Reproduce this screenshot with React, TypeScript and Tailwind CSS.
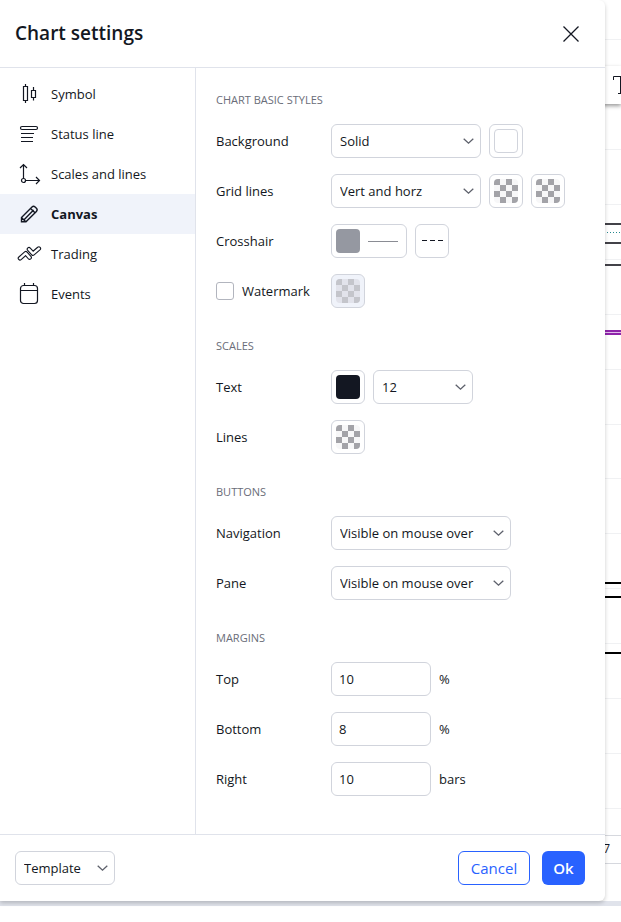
import { useId } from 'react';
import type { ReactNode } from 'react';

const menu: { name: string; icon: ReactNode }[] = [
  {
    name: 'Symbol',
    icon: (
      <path d="M8.5 6.5h4v14h-4z M10.5 4v2.5 M10.5 20.5V23 M16.5 10.5h4v7h-4z M18.5 7v3.5 M18.5 17.5v3" strokeWidth="1.2" />
    ),
  },
  {
    name: 'Status line',
    icon: (
      <g strokeWidth="1.2">
        <rect x="5.5" y="6.5" width="17" height="3" rx="1.5" />
        <path d="M6 13.5h13 M6 17.5h12 M6 21.5h12" />
      </g>
    ),
  },
  {
    name: 'Scales and lines',
    icon: (
      <g strokeWidth="1.2">
        <circle cx="8.5" cy="20.5" r="2" />
        <path d="M8.5 18.5v-14 M5 8l3.5-3.5 3.5 3.5 M10.5 20.5h14 M21 17l3.5 3.5-3.5 3.5" />
      </g>
    ),
  },
  {
    name: 'Canvas',
    icon: (
      <path
        strokeWidth="1.4"
        d="M6.5 17.5L17 7a2.2 2.2 0 0 1 3.1 0l1.3 1.3a2.2 2.2 0 0 1 0 3.1L11 21.8H6.5z M6.7 17.7l4.1 4.1 M9.3 19.4l9.3-9.3 M15.6 8.4l4.4 4.4"
      />
    ),
  },
  {
    name: 'Trading',
    icon: (
      <g strokeLinecap="round" strokeLinejoin="round">
        <path strokeWidth="4.6" d="M5 18.3L10.8 13.2 14.6 17.6 M14 9.2L18 13.6 23.8 8.6" />
        <path stroke="#fff" strokeWidth="2.4" d="M5 18.3L10.8 13.2 14.6 17.6 M14 9.2L18 13.6 23.8 8.6" />
      </g>
    ),
  },
  {
    name: 'Events',
    icon: (
      <g strokeWidth="1.2">
        <rect x="5.5" y="5.5" width="17" height="18" rx="3" />
        <path d="M5.5 10.5h17 M9.5 3v2.5 M18.5 3v2.5" />
      </g>
    ),
  },
];

function Dropdown({ label, value, width, id }: { label?: string; value: string; width: string; id?: string }) {
  return (
    <div className={`relative ${width}`}>
      <select
        id={id}
        aria-label={label}
        className="h-[34px] w-full appearance-none rounded-md border border-[#d1d4dc] bg-white pr-7 pl-2 text-[#131722]"
      >
        <option>{value}</option>
      </select>
      <svg
        className="pointer-events-none absolute top-[14px] right-[7px] h-[7px] w-[11px]"
        viewBox="0 0 11 7"
        fill="none"
        stroke="#5d606b"
        strokeWidth="1.3"
      >
        <path d="M.7 .8L5.5 5.2 10.3 .8" />
      </svg>
    </div>
  );
}

function Checker({ muted }: { muted?: boolean }) {
  return (
    <svg
      viewBox="0 0 24 24"
      className={muted ? 'size-6 rounded-sm bg-[#e2e3eb]' : 'size-6 rounded-sm bg-[#f7f7f8]'}
      fill={muted ? '#c4c5cb' : '#a3a3a8'}
      shapeRendering="crispEdges"
    >
      {[0, 1, 2, 3].map((row) =>
        [0, 1].map((col) => <rect key={`${row}-${col}`} x={col * 12 + (row % 2) * 6} y={row * 6} width="6" height="6" />),
      )}
    </svg>
  );
}

function Swatch({ label, id, children, disabled }: { label?: string; id?: string; children: ReactNode; disabled?: boolean }) {
  return (
    <button
      id={id}
      aria-label={label}
      disabled={disabled}
      className="flex size-[34px] items-center justify-center rounded-md border border-[#d1d4dc] bg-white disabled:bg-[#f0f3fa]"
    >
      {children}
    </button>
  );
}

function Section({ title, children }: { title: string; children: ReactNode }) {
  return (
    <section>
      <h2 className="mb-4 text-[11px] leading-4 text-[#6a6d78] uppercase">{title}</h2>
      <div className="flex flex-col gap-4">{children}</div>
    </section>
  );
}

function Row({ label, htmlFor, children }: { label: string; htmlFor: string; children: ReactNode }) {
  return (
    <div className="flex items-center">
      <label htmlFor={htmlFor} className="w-[115px] shrink-0">
        {label}
      </label>
      <div className="flex items-center gap-2">{children}</div>
    </div>
  );
}

function Margin({ label, value, unit }: { label: string; value: string; unit: string }) {
  const id = useId();
  return (
    <Row label={label} htmlFor={id}>
      <input
        id={id}
        type="text"
        inputMode="numeric"
        defaultValue={value}
        className="h-[34px] w-[100px] rounded-md border border-[#d1d4dc] px-[7px]"
      />
      <span>{unit}</span>
    </Row>
  );
}

function ChartBackdrop() {
  return (
    <div className="absolute inset-0 overflow-hidden" aria-hidden="true">
      <svg className="absolute inset-0 h-full w-full" shapeRendering="crispEdges">
        {[39, 149, 204, 259, 314, 369, 424, 478, 533, 588, 643, 698, 753, 808].map((y) => (
          <rect key={y} y={y} width="100%" height="1" fill="#f0f1f3" />
        ))}
        {[223, 242, 264].map((y) => (
          <rect key={y} y={y} width="100%" height="2" fill="#434248" />
        ))}
        <line x1="1" x2="100%" y1="232.5" y2="232.5" stroke="#26898f" strokeDasharray="1 2" />
        <rect y="330" width="100%" height="5" fill="#8e24aa" />
        <rect y="332" width="100%" height="1" fill="#e3bdec" />
        {[582, 596, 652].map((y) => (
          <rect key={y} y={y} width="100%" height="2" fill="#000" />
        ))}
        <rect y="835" width="100%" height="1" fill="#d6d8de" />
        <rect y="863" width="100%" height="1" fill="#d6d8de" />
        <rect y="901" width="100%" height="5" fill="#e0e3eb" />
      </svg>
      <div className="absolute top-[66px] right-0 h-[38px] w-20 bg-white shadow-[0_2px_4px_rgba(0,0,0,0.4)]" />
      <svg className="absolute top-[76px] right-0 h-[18px] w-2" fill="none" stroke="#131722">
        <path d="M.5 4V.5H8 M7.5 .5v17 M5 17.5h3" />
      </svg>
      <span className="absolute top-[841px] right-[11px] text-xs leading-4 text-[#131722]">7</span>
    </div>
  );
}

export default function App() {
  return (
    <div className="relative min-h-screen bg-white pr-4 font-['Trebuchet_MS','Open_Sans',sans-serif] text-[13px] leading-5 text-[#131722]">
      <ChartBackdrop />
      <div
        role="dialog"
        aria-labelledby="dialog-title"
        className="relative rounded-r-md bg-white shadow-[0_2px_4px_rgba(0,0,0,0.2)]"
      >
        <header className="flex items-center justify-between border-b border-[#e0e3eb] py-[18px] pr-5 pl-[15px]">
          <h1 id="dialog-title" className="text-[19px] leading-[31px] font-semibold">
            Chart settings
          </h1>
          <button aria-label="Close" className="flex size-7 items-center justify-center">
            <svg viewBox="0 0 18 18" className="size-[18px]" stroke="#131722" strokeWidth="1.3">
              <path d="M1.5 1.5l15 15M16.5 1.5l-15 15" />
            </svg>
          </button>
        </header>

        <div className="flex">
          <nav className="w-49 shrink-0 border-r border-[#e0e3eb] pt-1.5">
            {menu.map((item) => (
              <button
                key={item.name}
                aria-current={item.name === 'Canvas' ? 'page' : undefined}
                className="flex h-10 w-full items-center gap-2 pl-[15px] text-left aria-[current=page]:bg-[#f0f3fa] aria-[current=page]:font-bold"
              >
                <svg viewBox="0 0 28 28" className="size-7" fill="none" stroke="#131722">
                  {item.icon}
                </svg>
                {item.name}
              </button>
            ))}
          </nav>

          <main className="flex min-w-0 grow flex-col gap-[30px] pt-6 pb-[38px] pl-5">
            <Section title="Chart basic styles">
              <Row label="Background" htmlFor="background">
                <Dropdown id="background" value="Solid" width="w-[150px]" />
                <Swatch label="Background color">
                  <span className="size-6 rounded-sm border border-[#d1d4dc]" />
                </Swatch>
              </Row>
              <Row label="Grid lines" htmlFor="grid">
                <Dropdown id="grid" value="Vert and horz" width="w-[150px]" />
                <Swatch label="Vertical grid color">
                  <Checker />
                </Swatch>
                <Swatch label="Horizontal grid color">
                  <Checker />
                </Swatch>
              </Row>
              <Row label="Crosshair" htmlFor="crosshair">
                <button
                  id="crosshair"
                  className="flex h-[34px] w-[76px] items-center gap-2 rounded-md border border-[#d1d4dc] pl-1"
                >
                  <span className="size-6 rounded-sm bg-[#9598a1]" />
                  <span className="h-px w-[30px] bg-[#8a8c94]" />
                </button>
                <Swatch label="Crosshair line style">
                  <svg viewBox="0 0 22 2" className="h-0.5 w-[22px]" fill="#131722" shapeRendering="crispEdges">
                    <path d="M1 0h5v1H1zM9 0h5v1H9zM17 0h5v1h-5z" />
                  </svg>
                </Swatch>
              </Row>
              <div className="flex items-center">
                <label className="flex w-[115px] shrink-0 items-center gap-2">
                  <input
                    type="checkbox"
                    className="size-[18px] shrink-0 appearance-none rounded-[3px] border border-[#b2b5be] checked:bg-[#2962ff]"
                  />
                  Watermark
                </label>
                <Swatch label="Watermark color" disabled>
                  <Checker muted />
                </Swatch>
              </div>
            </Section>

            <Section title="Scales">
              <Row label="Text" htmlFor="text-color">
                <Swatch id="text-color">
                  <span className="size-6 rounded-sm bg-[#131722]" />
                </Swatch>
                <Dropdown label="Text size" value="12" width="w-[100px]" />
              </Row>
              <Row label="Lines" htmlFor="lines-color">
                <Swatch id="lines-color">
                  <Checker />
                </Swatch>
              </Row>
            </Section>

            <Section title="Buttons">
              <Row label="Navigation" htmlFor="navigation">
                <Dropdown id="navigation" value="Visible on mouse over" width="w-[180px]" />
              </Row>
              <Row label="Pane" htmlFor="pane">
                <Dropdown id="pane" value="Visible on mouse over" width="w-[180px]" />
              </Row>
            </Section>

            <Section title="Margins">
              <Margin label="Top" value="10" unit="%" />
              <Margin label="Bottom" value="8" unit="%" />
              <Margin label="Right" value="10" unit="bars" />
            </Section>
          </main>
        </div>

        <footer className="flex items-center gap-3 border-t border-[#e0e3eb] py-4 pr-5 pl-[15px]">
          <div className="mr-auto">
            <Dropdown label="Template" value="Template" width="w-[100px]" />
          </div>
          <button className="h-[34px] w-[72px] rounded-md border border-[#2962ff] text-[15px] text-[#2962ff]">Cancel</button>
          <button className="h-[34px] w-[43px] rounded-md bg-[#2962ff] text-[15px] font-semibold text-white">Ok</button>
        </footer>
      </div>
    </div>
  );
}
